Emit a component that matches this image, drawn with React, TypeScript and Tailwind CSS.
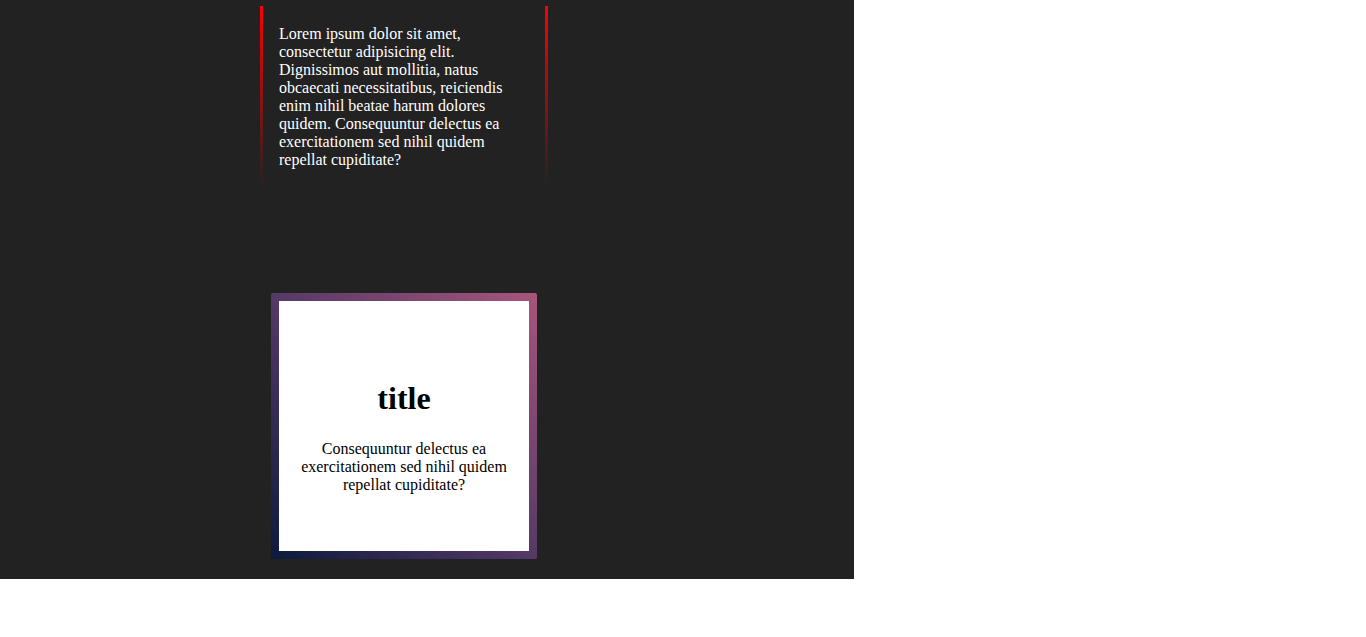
export default function App() {
  return (
    <div className="w-[854px] h-[579px] bg-[#222222] pt-[6px] font-['Liberation_Serif','Times_New_Roman',serif]">
      <div className="ml-[260px] w-[288px] flex flex-col items-center">
        <div className="w-[288px] h-[180px] grid grid-cols-[3px_1fr_3px]">
          <div className="bg-gradient-to-b from-[#ff0000] to-transparent" />
          <p className="px-4 pt-[19px] text-white text-[16px] leading-[18px]">
            Lorem ipsum dolor sit amet, consectetur adipisicing elit. Dignissimos aut mollitia, natus obcaecati necessitatibus, reiciendis enim nihil beatae harum dolores quidem. Consequuntur delectus ea exercitationem sed nihil quidem repellat cupiditate?
          </p>
          <div className="bg-gradient-to-b from-[#ff0000] to-transparent" />
        </div>
        <div className="mt-[107px] w-[266px] h-[266px] p-[8px] rounded-[2px] bg-gradient-to-tr from-[#0b1a3c] via-[#563966] to-[#a8557c]">
          <div className="w-[250px] h-[250px] bg-white flex flex-col items-center pt-[79px] px-5 text-black">
            <h1 className="text-[32px] leading-[37px] font-bold">title</h1>
            <p className="mt-[23px] text-[16px] leading-[18px] text-center">
              Consequuntur delectus ea exercitationem sed nihil quidem repellat cupiditate?
            </p>
          </div>
        </div>
      </div>
    </div>
  );
}
